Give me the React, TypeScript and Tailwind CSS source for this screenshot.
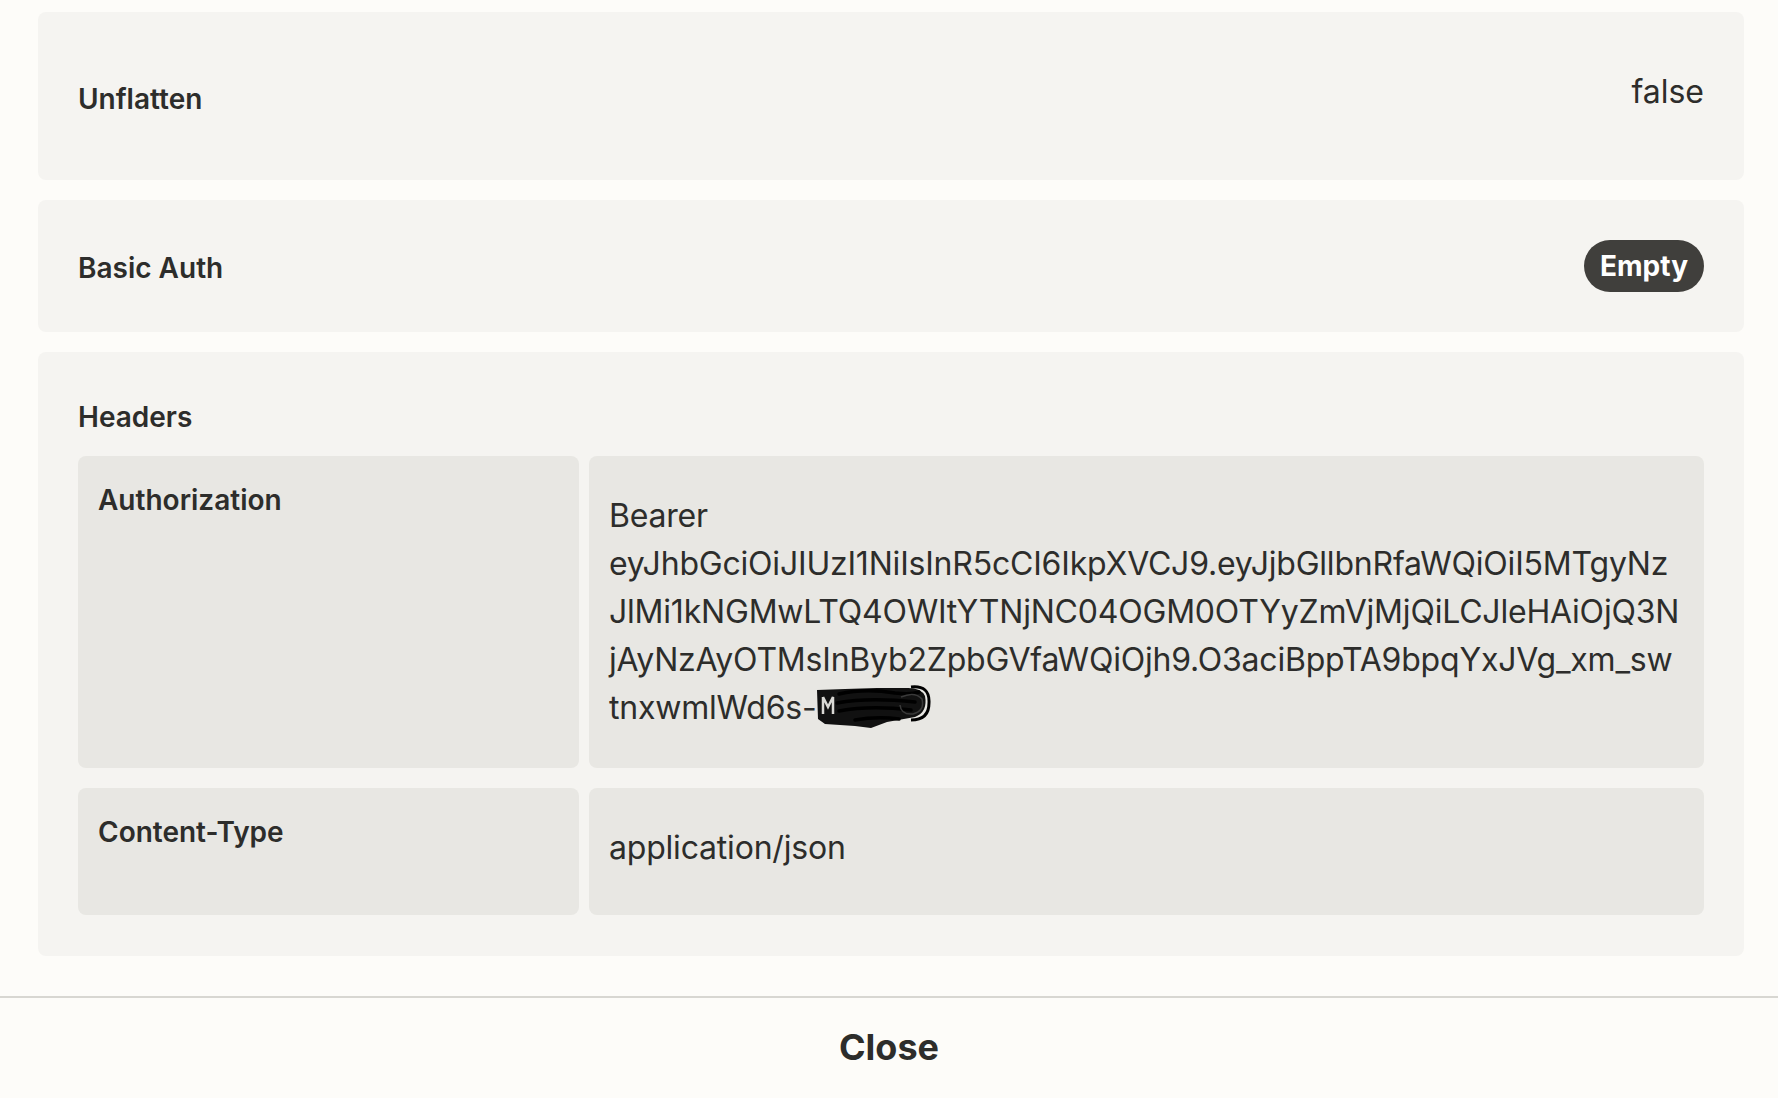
import React from 'react'

const TOKEN_LINES = [
  'Bearer',
  'eyJhbGciOiJIUzI1NiIsInR5cCI6IkpXVCJ9.eyJjbGllbnRfaWQiOiI5MTgyNz',
  'JlMi1kNGMwLTQ4OWItYTNjNC04OGM0OTYyZmVjMjQiLCJleHAiOjQ3N',
  'jAyNzAyOTMsInByb2ZpbGVfaWQiOjh9.O3aciBppTA9bpqYxJVg_xm_sw',
]

// hand-drawn redaction over the end of the token
function Scribble() {
  return (
    <svg width="116" height="46" viewBox="0 0 116 46" className="inline-block align-middle -mt-[6px] -ml-[2px]">
      <path d="M2 6 L30 5 L62 4 L90 4 Q106 3 110 12 Q113 28 100 33 L72 38 L56 44 L40 42 L10 40 L3 35 Z" fill="#111" />
      <path d="M8 13 L8 30 M8 13 L13 23 L18 13 L18 30" stroke="#d9d8d4" strokeWidth="2.5" fill="none" />
      <path d="M24 10 Q50 4 80 9 Q96 11 104 8 M22 19 Q54 13 100 18 M24 27 Q56 21 96 26 M40 36 Q62 32 84 35" stroke="#000" strokeWidth="3.5" fill="none" strokeLinecap="round" />
      <path d="M86 13 Q100 7 107 15 Q110 27 98 30 Q86 31 85 21" stroke="#3a3a3a" strokeWidth="1.5" fill="none" />
      <path d="M96 3 Q115 1 114 19 Q114 36 96 36" stroke="#000" strokeWidth="3" fill="none" />
    </svg>
  )
}

function KeyCell({ children }: { children: React.ReactNode }) {
  return (
    <div className="bg-[#e8e7e3] rounded-[8px] px-[20px] pt-[23px] text-[28px] leading-[42px] font-semibold">
      {children}
    </div>
  )
}

function ValueCell({ children, extra }: { children: React.ReactNode; extra?: string }) {
  return (
    <div className={`bg-[#e8e7e3] rounded-[8px] pl-[20px] pr-[20px] py-[36px] flex items-center text-[32px] leading-[48px] tracking-[-0.2px] ${extra ?? ''}`}>
      <div className="whitespace-nowrap">{children}</div>
    </div>
  )
}

export default function App() {
  return (
    <div
      className="h-[1098px] w-full overflow-hidden bg-[#fdfcf9] text-[#2d2d2b] flex flex-col"
      style={{ fontFamily: 'Inter, "Noto Sans", sans-serif' }}
    >
      <div className="flex-1 pt-[12px] pl-[38px] pr-[34px] flex flex-col gap-[20px]">
        <div className="h-[168px] bg-[#f5f4f1] rounded-[8px] px-[40px] flex items-center justify-between">
          <span className="text-[28px] leading-[42px] font-semibold mt-[5px]">Unflatten</span>
          <span className="text-[32px] leading-[48px] mb-[9px]">false</span>
        </div>

        <div className="h-[132px] bg-[#f5f4f1] rounded-[8px] px-[40px] flex items-center justify-between">
          <span className="text-[28px] leading-[42px] font-semibold mt-[4px]">Basic Auth</span>
          <span className="h-[52px] px-[16px] rounded-full bg-[#403f3c] text-white text-[28px] font-bold flex items-center">
            Empty
          </span>
        </div>

        <div className="bg-[#f5f4f1] rounded-[8px] px-[40px] pt-[44px] pb-[41px]">
          <div className="text-[28px] leading-[42px] font-semibold">Headers</div>
          <div className="mt-[18px] grid grid-cols-[501px_1fr] gap-x-[10px] gap-y-[20px]">
            <KeyCell>Authorization</KeyCell>
            <ValueCell>
              {TOKEN_LINES.map((l) => (
                <div key={l}>{l}</div>
              ))}
              <div>
                tnxwmlWd6s-
                <Scribble />
              </div>
            </ValueCell>
            <KeyCell>Content-Type</KeyCell>
            <ValueCell extra="pt-[36px] pb-[43px]">application/json</ValueCell>
          </div>
        </div>
      </div>

      <div className="h-[102px] border-t-2 border-[#d8d7d2] flex items-center justify-center pb-[2px]">
        <span className="text-[36px] font-bold leading-none">Close</span>
      </div>
    </div>
  )
}
